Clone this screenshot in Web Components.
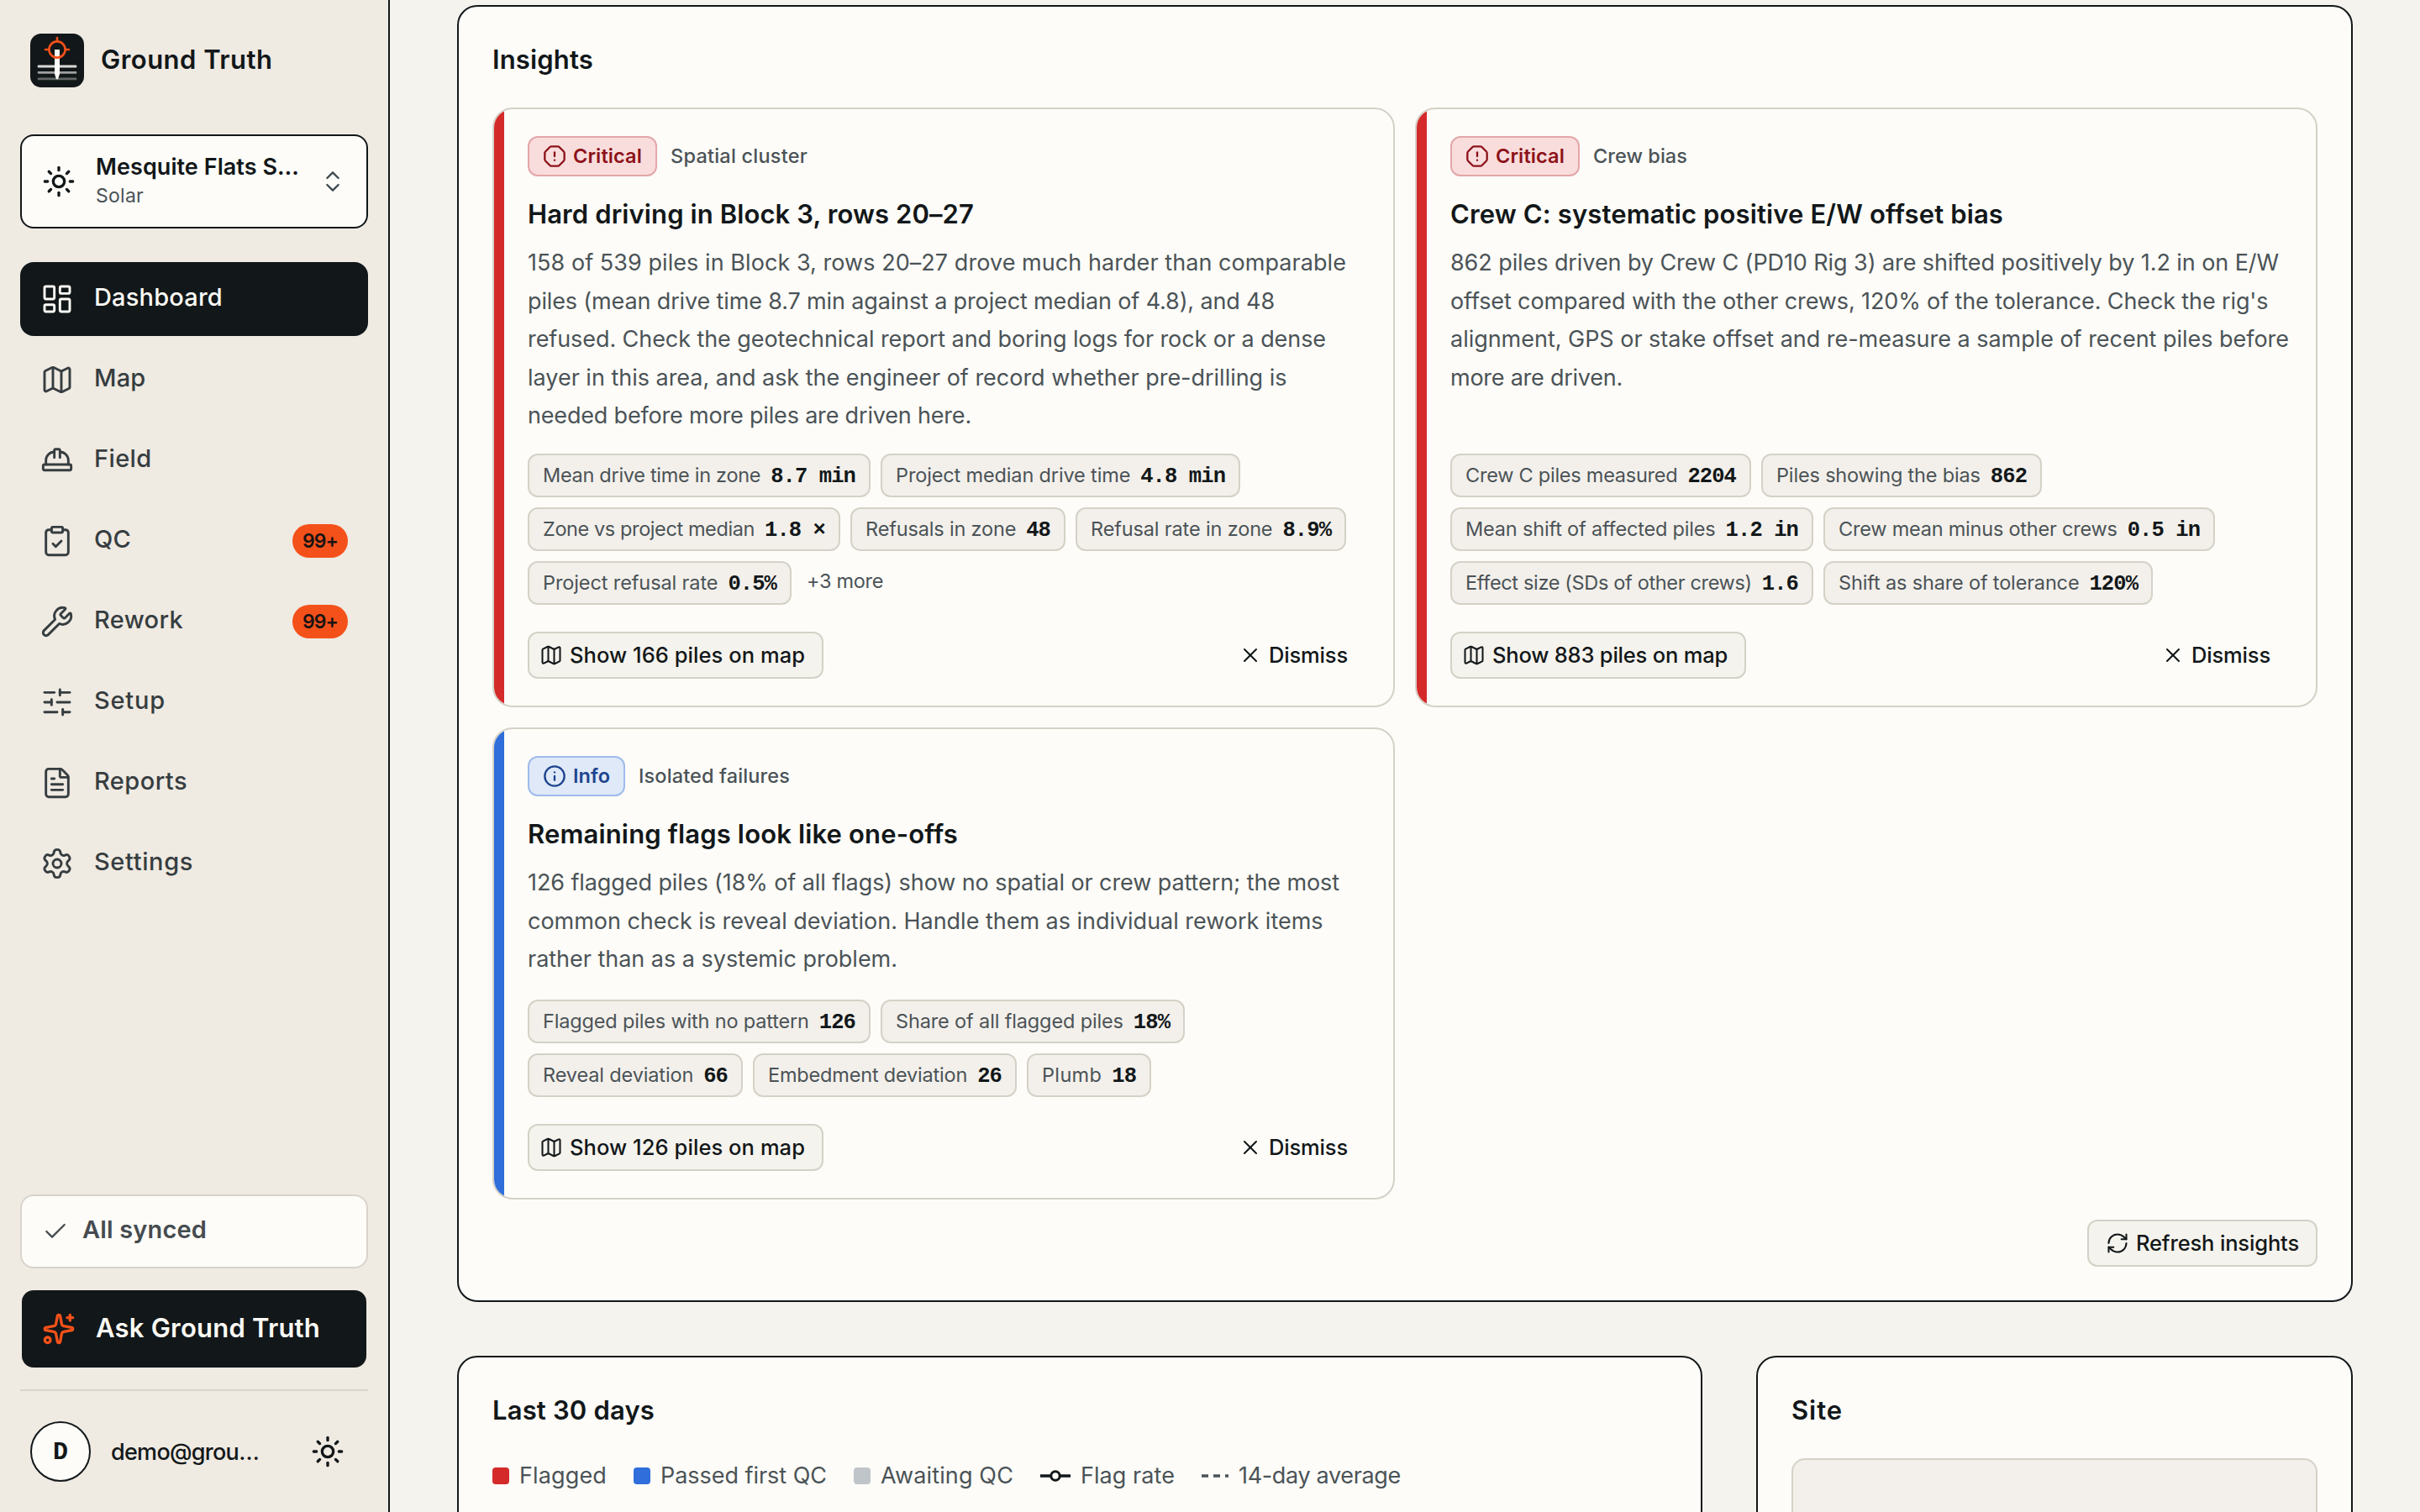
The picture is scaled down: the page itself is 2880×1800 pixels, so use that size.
<!DOCTYPE html>
<html lang="en">
<head>
<meta charset="utf-8">
<title>Ground Truth</title>
<style>
  html, body { margin: 0; height: 100%; overflow: hidden; }
  body {
    --ink: #121719;
    --muted: #4b5357;
    --line: #d4d1c7;
    --surface: #fdfcf8;
    --page: #f5f3ee;
    --sunken: #f3f0eb;
    --orange: #f4511a;
    --red: #d42a2a;
    --blue: #2f6edb;
    background: var(--page);
    color: var(--ink);
    font-family: Inter, "Liberation Sans", sans-serif;
  }
</style>
</head>
<body>
<ground-truth-app></ground-truth-app>

<script>
const icons = {
  sun: '<circle cx="12" cy="12" r="4"/><path d="M12 2v2"/><path d="M12 20v2"/><path d="m4.93 4.93 1.41 1.41"/><path d="m17.66 17.66 1.41 1.41"/><path d="M2 12h2"/><path d="M20 12h2"/><path d="m6.34 17.66-1.41 1.41"/><path d="m19.07 4.93-1.41 1.41"/>',
  updown: '<path d="m7 15 5 5 5-5"/><path d="m7 9 5-5 5 5"/>',
  dashboard: '<rect width="7" height="9" x="3" y="3" rx="1"/><rect width="7" height="5" x="14" y="3" rx="1"/><rect width="7" height="9" x="14" y="12" rx="1"/><rect width="7" height="5" x="3" y="16" rx="1"/>',
  map: '<path d="M14.106 5.553a2 2 0 0 0 1.788 0l3.659-1.83A1 1 0 0 1 21 4.619v12.764a1 1 0 0 1-.553.894l-4.553 2.277a2 2 0 0 1-1.788 0l-4.212-2.106a2 2 0 0 0-1.788 0l-3.659 1.83A1 1 0 0 1 3 19.381V6.618a1 1 0 0 1 .553-.894l4.553-2.277a2 2 0 0 1 1.788 0z"/><path d="M15 5.764v15"/><path d="M9 3.236v15"/>',
  field: '<path d="M10 10V5a1 1 0 0 1 1-1h2a1 1 0 0 1 1 1v5"/><path d="M14 6a6 6 0 0 1 6 6v3"/><path d="M4 15v-3a6 6 0 0 1 6-6"/><rect x="2" y="15" width="20" height="4" rx="1"/>',
  qc: '<rect width="8" height="4" x="8" y="2" rx="1"/><path d="M16 4h2a2 2 0 0 1 2 2v14a2 2 0 0 1-2 2H6a2 2 0 0 1-2-2V6a2 2 0 0 1 2-2h2"/><path d="m9 14 2 2 4-4"/>',
  rework: '<path d="M14.7 6.3a1 1 0 0 0 0 1.4l1.6 1.6a1 1 0 0 0 1.4 0l3.106-3.105c.32-.322.863-.22.983.218a6 6 0 0 1-8.259 7.057l-7.91 7.91a1 1 0 0 1-2.999-3l7.91-7.91a6 6 0 0 1 7.057-8.259c.438.12.54.662.219.984z"/>',
  setup: '<path d="M10 5H3"/><path d="M12 19H3"/><path d="M14 3v4"/><path d="M16 17v4"/><path d="M21 12h-9"/><path d="M21 19h-5"/><path d="M21 5h-7"/><path d="M8 10v4"/><path d="M8 12H3"/>',
  reports: '<path d="M6 22a2 2 0 0 1-2-2V4a2 2 0 0 1 2-2h8a2.4 2.4 0 0 1 1.704.706l3.588 3.588A2.4 2.4 0 0 1 20 8v12a2 2 0 0 1-2 2z"/><path d="M14 2v5a1 1 0 0 0 1 1h5"/><path d="M10 9H8"/><path d="M16 13H8"/><path d="M16 17H8"/>',
  settings: '<path d="M9.671 4.136a2.34 2.34 0 0 1 4.659 0 2.34 2.34 0 0 0 3.319 1.915 2.34 2.34 0 0 1 2.33 4.033 2.34 2.34 0 0 0 0 3.831 2.34 2.34 0 0 1-2.33 4.033 2.34 2.34 0 0 0-3.319 1.915 2.34 2.34 0 0 1-4.659 0 2.34 2.34 0 0 0-3.32-1.915 2.34 2.34 0 0 1-2.33-4.033 2.34 2.34 0 0 0 0-3.831A2.34 2.34 0 0 1 6.35 6.051a2.34 2.34 0 0 0 3.319-1.915"/><circle cx="12" cy="12" r="3"/>',
  check: '<path d="M20 6 9 17l-5-5"/>',
  sparkles: '<path d="M11.017 2.814a1 1 0 0 1 1.966 0l1.051 5.558a2 2 0 0 0 1.594 1.594l5.558 1.051a1 1 0 0 1 0 1.966l-5.558 1.051a2 2 0 0 0-1.594 1.594l-1.051 5.558a1 1 0 0 1-1.966 0l-1.051-5.558a2 2 0 0 0-1.594-1.594l-5.558-1.051a1 1 0 0 1 0-1.966l5.558-1.051a2 2 0 0 0 1.594-1.594z"/><path d="M20 2v4"/><path d="M22 4h-4"/><circle cx="4" cy="20" r="2"/>',
  critical: '<path d="M12 16h.01"/><path d="M12 8v4"/><path d="M15.312 2a2 2 0 0 1 1.414.586l4.688 4.688A2 2 0 0 1 22 8.688v6.624a2 2 0 0 1-.586 1.414l-4.688 4.688a2 2 0 0 1-1.414.586H8.688a2 2 0 0 1-1.414-.586l-4.688-4.688A2 2 0 0 1 2 15.312V8.688a2 2 0 0 1 .586-1.414l4.688-4.688A2 2 0 0 1 8.688 2z"/>',
  info: '<circle cx="12" cy="12" r="10"/><path d="M12 16v-4"/><path d="M12 8h.01"/>',
  close: '<path d="M18 6 6 18"/><path d="m6 6 12 12"/>',
  refresh: '<path d="M3 12a9 9 0 0 1 9-9 9.75 9.75 0 0 1 6.74 2.74L21 8"/><path d="M21 3v5h-5"/><path d="M21 12a9 9 0 0 1-9 9 9.75 9.75 0 0 1-6.74-2.74L3 16"/><path d="M8 16H3v5"/>'
}

class GtIcon extends HTMLElement {
  connectedCallback() {
    const size = this.getAttribute('size') || 40
    this.attachShadow({ mode: 'open' }).innerHTML = `
      <style>
        :host { display: block; flex: none; width: ${size}px; height: ${size}px; }
        svg { display: block; fill: none; stroke: currentColor; stroke-linecap: round; stroke-linejoin: round; }
      </style>
      <svg width="${size}" height="${size}" viewBox="0 0 24 24" stroke-width="${this.getAttribute('stroke') || 1.75}">${icons[this.getAttribute('name')]}</svg>`
  }
}

// One line of text, tracked so that it takes exactly `width` pixels.
class FitText extends HTMLElement {
  connectedCallback() {
    this.attachShadow({ mode: 'open' }).innerHTML = `
      <style>
        :host { display: block; width: max-content; flex: none; white-space: nowrap; }
      </style><slot></slot>`
    const width = Number(this.getAttribute('width'))
    const natural = this.getBoundingClientRect().width
    if (width && natural) {
      this.style.letterSpacing = (width - natural) / this.textContent.length + 'px'
    }
  }
}

class BrandLogo extends HTMLElement {
  connectedCallback() {
    this.attachShadow({ mode: 'open' }).innerHTML = `
      <style>
        :host { display: flex; align-items: center; gap: 20px; padding-left: 12px; height: 64px; }
        svg { display: block; }
        fit-text { font-size: 31px; font-weight: 600; padding-bottom: 3px; }
      </style>
      <svg width="64" height="64" viewBox="0 0 64 64">
        <rect width="64" height="64" rx="13" fill="#121719"/>
        <g fill="#fdfcf8">
          <rect x="8.7" y="37.5" width="46.6" height="3" rx="1" opacity=".85"/>
          <rect x="8.7" y="45" width="46.6" height="2.8" rx="1" opacity=".6"/>
          <rect x="8.7" y="52.6" width="46.6" height="2.6" rx="1" opacity=".35"/>
          <path d="M29 19h6v29l-2 6.3h-2L29 48z"/>
        </g>
        <g fill="none" stroke="#f4511a" stroke-width="2.6" stroke-linecap="round">
          <circle cx="32" cy="19" r="9.6"/>
          <path d="M32 5v4M18 19h4M42 19h4"/>
        </g>
      </svg>
      <fit-text width="204.5">Ground Truth</fit-text>`
  }
}

class ProjectPicker extends HTMLElement {
  connectedCallback() {
    this.attachShadow({ mode: 'open' }).innerHTML = `
      <style>
        :host {
          display: flex; align-items: center; box-sizing: border-box; height: 112px; padding: 0 24px;
          border: 2px solid var(--ink); border-radius: 16px; background: var(--surface);
        }
        div { flex: 1; margin-left: 24px; padding-bottom: 3px; }
        .name { font-size: 27px; line-height: 36px; font-weight: 600; }
        .kind { font-size: 23px; line-height: 32px; color: var(--muted); }
        .toggle { color: #3f4a50; }
      </style>
      <gt-icon name="sun" stroke="2"></gt-icon>
      <div>
        <fit-text class="name" width="242">Mesquite Flats S…</fit-text>
        <fit-text class="kind" width="57">Solar</fit-text>
      </div>
      <gt-icon class="toggle" name="updown" size="32"></gt-icon>`
  }
}

class NavItem extends HTMLElement {
  connectedCallback() {
    const count = this.getAttribute('count')
    this.attachShadow({ mode: 'open' }).innerHTML = `
      <style>
        :host {
          display: flex; align-items: center; gap: 24px; box-sizing: border-box; height: 88px;
          padding: 0 24px; border-radius: 16px; color: #363d40;
        }
        :host([active]) { background: var(--ink); color: #fbfaf5; }
        .label { font-size: 29px; font-weight: 500; padding-bottom: 6px; }
        .count {
          display: flex; align-items: center; box-sizing: border-box; height: 40px; margin-left: auto;
          padding: 0 12px 1px; border-radius: 20px; background: var(--orange); color: #1a1412;
          font-size: 23px; font-weight: 600;
        }
      </style>
      <gt-icon name="${this.getAttribute('icon')}"></gt-icon>
      <fit-text class="label" width="${this.getAttribute('width')}">${this.getAttribute('label')}</fit-text>
      ${count ? `<div class="count"><fit-text width="42">${count}</fit-text></div>` : ''}`
  }
}

class SideBar extends HTMLElement {
  connectedCallback() {
    this.attachShadow({ mode: 'open' }).innerHTML = `
      <style>
        :host {
          display: flex; flex-direction: column; flex: none; box-sizing: border-box; width: 464px;
          padding: 40px 24px 36px; border-right: 2px solid var(--ink); background: #efeae2;
        }
        project-picker { margin-top: 56px; }
        nav { display: flex; flex-direction: column; gap: 8px; margin-top: 40px; }
        .synced {
          display: flex; align-items: center; gap: 16px; box-sizing: border-box; height: 88px;
          margin-top: auto; padding: 0 24px; border: 2px solid #d8d3cb; border-radius: 16px;
          background: var(--surface); color: #454b4f;
        }
        .synced fit-text { font-size: 29px; font-weight: 600; padding-bottom: 5px; }
        .ask {
          display: flex; align-items: center; gap: 24px; height: 92px; margin: 26px 2px;
          padding: 0 24px; border-radius: 14px; background: var(--ink); color: #fbfaf5;
        }
        .ask gt-icon { color: var(--orange); }
        .ask fit-text { font-size: 31px; font-weight: 600; padding-bottom: 3px; }
        .account {
          display: flex; align-items: center; border-top: 2px solid #d8d3cb; padding: 36px 28px 0 12px;
        }
        .avatar {
          display: flex; align-items: center; justify-content: center; box-sizing: border-box;
          width: 72px; height: 72px; padding-top: 2px; border: 2px solid var(--ink); border-radius: 50%;
          background: var(--surface); font: bold 30px "Liberation Mono", monospace;
        }
        .mail { margin-left: 24px; font-size: 27px; font-weight: 500; }
        .theme { margin-left: auto; }
      </style>
      <brand-logo></brand-logo>
      <project-picker></project-picker>
      <nav>
        <nav-item active icon="dashboard" label="Dashboard" width="153"></nav-item>
        <nav-item icon="map" label="Map" width="61.5"></nav-item>
        <nav-item icon="field" label="Field" width="68.5"></nav-item>
        <nav-item icon="qc" label="QC" width="44" count="99+"></nav-item>
        <nav-item icon="rework" label="Rework" width="106" count="99+"></nav-item>
        <nav-item icon="setup" label="Setup" width="85"></nav-item>
        <nav-item icon="reports" label="Reports" width="111"></nav-item>
        <nav-item icon="settings" label="Settings" width="118"></nav-item>
      </nav>
      <div class="synced"><gt-icon name="check" size="32"></gt-icon><fit-text width="148">All synced</fit-text></div>
      <div class="ask"><gt-icon name="sparkles" stroke="2"></gt-icon><fit-text width="267">Ask Ground Truth</fit-text></div>
      <div class="account">
        <div class="avatar">D</div>
        <fit-text class="mail" width="176">demo@grou…</fit-text>
        <gt-icon class="theme" name="sun" stroke="2"></gt-icon>
      </div>`
  }
}

class PanelCard extends HTMLElement {
  connectedCallback() {
    this.attachShadow({ mode: 'open' }).innerHTML = `
      <style>
        :host {
          display: block; box-sizing: border-box; padding: 40px;
          border: 2px solid var(--ink); border-radius: 24px; background: var(--surface);
        }
        .heading { font-size: 31px; line-height: 45px; font-weight: 600; }
      </style>
      <fit-text class="heading" width="${this.getAttribute('width')}">${this.getAttribute('heading')}</fit-text>
      <slot></slot>`
  }
}

class GtButton extends HTMLElement {
  connectedCallback() {
    this.attachShadow({ mode: 'open' }).innerHTML = `
      <style>
        :host {
          display: flex; align-items: center; gap: 8px; box-sizing: border-box; height: 56px;
          padding: 0 20px 0 12px; border: 2px solid var(--line); border-radius: 12px;
          background: #f5f3ed; font-size: 25.5px; font-weight: 500;
        }
        :host([ghost]) { border-color: transparent; background: none; padding-right: 24px; }
        :host([wide]) { padding-left: 20px; }
        fit-text { padding-bottom: 1px; }
      </style>
      <gt-icon name="${this.getAttribute('icon')}" size="28"></gt-icon>
      <fit-text width="${this.getAttribute('width')}">${this.getAttribute('label')}</fit-text>`
  }
}

class StatChip extends HTMLElement {
  connectedCallback() {
    this.attachShadow({ mode: 'open' }).innerHTML = `
      <style>
        :host {
          display: flex; align-items: baseline; gap: 12px; box-sizing: border-box; height: 52px;
          padding: 0 16px; border: 2px solid var(--line); border-radius: 12px;
          background: var(--sunken); line-height: 48px;
        }
        .label { font-size: 23.5px; color: var(--muted); }
        .value { font: bold 25.5px/1 "Liberation Mono", monospace; letter-spacing: -.9px; white-space: pre; }
      </style>
      <fit-text class="label" width="${this.getAttribute('width')}">${this.getAttribute('label')}</fit-text>
      <span class="value">${this.getAttribute('value')}</span>`
  }
}

class InsightCard extends HTMLElement {
  connectedCallback() {
    const d = this.insight
    const info = d.severity === 'Info'
    this.attachShadow({ mode: 'open' }).innerHTML = `
      <style>
        :host {
          display: flex; box-sizing: border-box; overflow: hidden;
          border: 2px solid var(--line); border-radius: 24px; background: var(--surface);
        }
        .stripe { flex: none; width: 12px; background: ${info ? 'var(--blue)' : 'var(--red)'}; }
        .content { display: flex; flex-direction: column; flex: 1; padding: 32px 28px; }
        .meta { display: flex; align-items: center; gap: 16px; }
        .severity {
          display: flex; align-items: center; gap: 8px; box-sizing: border-box; height: 48px;
          padding: 0 16px; border: 2px solid ${info ? '#9fbbea' : '#e3a6a9'}; border-radius: 12px;
          background: ${info ? '#dfe9f8' : '#f9dddc'}; color: ${info ? '#1e448f' : '#8c1219'};
          font-size: 23.5px; font-weight: 600;
        }
        .severity fit-text, .kind { padding-bottom: 1px; }
        .kind { font-size: 23.5px; font-weight: 500; color: var(--muted); }
        .title { margin-top: 23px; font-size: 31px; line-height: 44px; font-weight: 600; }
        .body { margin: 13px 0 0; font-size: 27px; line-height: 45.5px; color: var(--muted); }
        .stats { display: flex; flex-direction: column; gap: 12px; margin-top: auto; }
        .stats > div { display: flex; gap: 12px; }
        .more { margin-left: 6px; padding-bottom: 5px; align-self: center; font-size: 23.5px; color: var(--muted); }
        .actions { display: flex; justify-content: space-between; margin-top: 32px; }
      </style>
      <div class="stripe"></div>
      <div class="content">
        <div class="meta">
          <div class="severity">
            <gt-icon name="${d.severity.toLowerCase()}" size="28" stroke="2"></gt-icon>
            <fit-text width="${info ? 44 : 82}">${d.severity}</fit-text>
          </div>
          <fit-text class="kind" width="${d.kind[1]}">${d.kind[0]}</fit-text>
        </div>
        <fit-text class="title" width="${d.title[1]}">${d.title[0]}</fit-text>
        <div class="body">${d.body.map(([text, w]) => `<fit-text width="${w}">${text}</fit-text>`).join('')}</div>
        <div class="stats">${d.stats.map(row => `<div>${row.map(([label, value, w]) => value
          ? `<stat-chip label="${label}" value="${value}" width="${w}"></stat-chip>`
          : `<fit-text class="more" width="${w}">${label}</fit-text>`).join('')}</div>`).join('')}</div>
        <div class="actions">
          <gt-button icon="map" label="Show ${d.piles} piles on map" width="280"></gt-button>
          <gt-button ghost icon="close" label="Dismiss" width="94"></gt-button>
        </div>
      </div>`
  }
}

class ChartLegend extends HTMLElement {
  connectedCallback() {
    this.attachShadow({ mode: 'open' }).innerHTML = `
      <style>
        :host { display: flex; gap: 32px; margin-top: 34px; font-size: 27px; line-height: 44px; color: var(--muted); }
        div { display: flex; align-items: center; gap: 12px; }
        i { width: 20px; height: 20px; border-radius: 4px; }
      </style>
      <div><i style="background: var(--red)"></i><fit-text width="104">Flagged</fit-text></div>
      <div><i style="background: var(--blue)"></i><fit-text width="198">Passed first QC</fit-text></div>
      <div><i style="background: #bfc5c8"></i><fit-text width="158">Awaiting QC</fit-text></div>
      <div>
        <svg width="36" height="16" viewBox="0 0 36 16">
          <path d="M0 8h36" stroke="#121719" stroke-width="3.4"/>
          <circle cx="18" cy="8" r="5.2" fill="#fdfcf8" stroke="#121719" stroke-width="3"/>
        </svg>
        <fit-text width="112">Flag rate</fit-text>
      </div>
      <div>
        <svg width="32" height="16" viewBox="0 0 32 16">
          <path d="M0 8h32" stroke="#4b5357" stroke-width="3.4" stroke-dasharray="8 6"/>
        </svg>
        <fit-text width="193">14-day average</fit-text>
      </div>`
  }
}

const insights = [
  {
    severity: 'Critical',
    kind: ['Spatial cluster', 163],
    title: ['Hard driving in Block 3, rows 20–27', 531],
    body: [
      ['158 of 539 piles in Block 3, rows 20–27 drove much harder than comparable', 974],
      ['piles (mean drive time 8.7 min against a project median of 4.8), and 48', 889],
      ['refused. Check the geotechnical report and boring logs for rock or a dense', 950],
      ['layer in this area, and ask the engineer of record whether pre-drilling is', 903.5],
      ['needed before more piles are driven here.', 528]
    ],
    stats: [
      [['Mean drive time in zone', '8.7 min', 259.2], ['Project median drive time', '4.8 min', 279.2]],
      [['Zone vs project median', '1.8 ×', 252], ['Refusals in zone', '48', 179.2], ['Refusal rate in zone', '8.9%', 216.4]],
      [['Project refusal rate', '0.5%', 208.4], ['+3 more', '', 91]]
    ],
    piles: 166
  },
  {
    severity: 'Critical',
    kind: ['Crew bias', 112],
    title: ['Crew C: systematic positive E/W offset bias', 658],
    body: [
      ['862 piles driven by Crew C (PD10 Rig 3) are shifted positively by 1.2 in on E/W', 986],
      ['offset compared with the other crews, 120% of the tolerance. Check the rig\'s', 973.5],
      ['alignment, GPS or stake offset and re-measure a sample of recent piles before', 998],
      ['more are driven.', 205]
    ],
    stats: [
      [['Crew C piles measured', '2204', 252.4], ['Piles showing the bias', '862', 242.8]],
      [['Mean shift of affected piles', '1.2 in', 297.6], ['Crew mean minus other crews', '0.5 in', 331.6]],
      [['Effect size (SDs of other crews)', '1.6', 340.8], ['Shift as share of tolerance', '120%', 286.4]]
    ],
    piles: 883
  },
  {
    severity: 'Info',
    kind: ['Isolated failures', 180],
    title: ['Remaining flags look like one-offs', 512],
    body: [
      ['126 flagged piles (18% of all flags) show no spatial or crew pattern; the most', 966],
      ['common check is reveal deviation. Handle them as individual rework items', 946.5],
      ['rather than as a systemic problem.', 440]
    ],
    stats: [
      [['Flagged piles with no pattern', '126', 316.8], ['Share of all flagged piles', '18%', 270.8]],
      [['Reveal deviation', '66', 179.2], ['Embedment deviation', '26', 237.2], ['Plumb', '18', 71.2]]
    ],
    piles: 126
  }
]

class GroundTruthApp extends HTMLElement {
  connectedCallback() {
    const root = this.attachShadow({ mode: 'open' })
    root.innerHTML = `
      <style>
        :host { display: flex; height: 100vh; }
        main { display: flex; flex-direction: column; gap: 64px; flex: 1; box-sizing: border-box; height: 100vh; padding: 6px 80px 0; overflow: hidden; }
        .insights { flex: none; height: 1544px; }
        .grid { display: grid; grid-template-columns: 1fr 1fr; grid-template-rows: 714px 562px; gap: 24px; margin-top: 35px; }
        .refresh { display: flex; justify-content: flex-end; margin-top: 24px; }
        .row { display: flex; gap: 64px; flex: none; height: 240px; }
        .trend { width: 1482px; }
        .site { flex: 1; }
        .map { box-sizing: border-box; height: 180px; margin-top: 35px; border: 2px solid var(--line); border-radius: 16px; background: var(--sunken); }
      </style>
      <side-bar></side-bar>
      <main>
        <panel-card class="insights" heading="Insights" width="120">
          <div class="grid"></div>
          <div class="refresh"><gt-button wide icon="refresh" label="Refresh insights" width="194"></gt-button></div>
        </panel-card>
        <div class="row">
          <panel-card class="trend" heading="Last 30 days" width="193"><chart-legend></chart-legend></panel-card>
          <panel-card class="site" heading="Site" width="61"><div class="map"></div></panel-card>
        </div>
      </main>`
    const grid = root.querySelector('.grid')
    insights.forEach(insight => {
      const card = document.createElement('insight-card')
      card.insight = insight
      grid.appendChild(card)
    })
  }
}

customElements.define('gt-icon', GtIcon)
customElements.define('fit-text', FitText)
customElements.define('brand-logo', BrandLogo)
customElements.define('project-picker', ProjectPicker)
customElements.define('nav-item', NavItem)
customElements.define('side-bar', SideBar)
customElements.define('panel-card', PanelCard)
customElements.define('gt-button', GtButton)
customElements.define('stat-chip', StatChip)
customElements.define('insight-card', InsightCard)
customElements.define('chart-legend', ChartLegend)
customElements.define('ground-truth-app', GroundTruthApp)
</script>
</body>
</html>
